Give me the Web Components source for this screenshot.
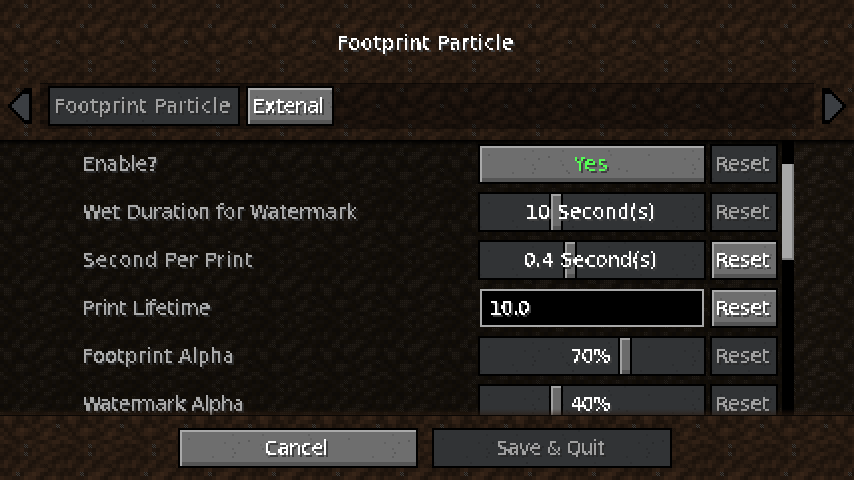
<!DOCTYPE html>
<html><head><meta charset="utf-8">
<style>
html,body{margin:0;padding:0;width:854px;height:480px;overflow:hidden;background:#1c130c}
</style></head>
<body>
<mc-screen>
  <mc-text slot="title" w="178" color="#fff">Footprint Particle</mc-text>
  <mc-button slot="tabs" width="192" tw="178" disabled>Footprint Particle</mc-button>
  <mc-button slot="tabs" width="88" tw="74">Extenal</mc-button>

  <mc-row label="Enable?" lw="77" reset="off"><mc-button width="228" green tw="36">Yes</mc-button></mc-row>
  <mc-row label="Wet Duration for Watermark" lw="276" reset="off"><mc-slider pos="71" tw="132">10 Second(s)</mc-slider></mc-row>
  <mc-row label="Second Per Print" lw="172" reset="on"><mc-slider pos="85" tw="136">0.4 Second(s)</mc-slider></mc-row>
  <mc-row label="Print Lifetime" lw="130" reset="on"><mc-field tw="42">10.0</mc-field></mc-row>
  <mc-row label="Footprint Alpha" lw="154" reset="off"><mc-slider pos="140" tw="42">70%</mc-slider></mc-row>
  <mc-row label="Watermark Alpha" lw="164" reset="off"><mc-slider pos="71" tw="42">40%</mc-slider></mc-row>

  <mc-button slot="footer" width="240" tw="66">Cancel</mc-button>
  <mc-button slot="footer" width="240" disabled tw="111">Save &amp; Quit</mc-button>
</mc-screen>

<script>
(function(){
  const map=["2101231021321012","101212g132112321","0120011220133101","1321023101221012",
   "23112320121k2132","0102311123320121","1013g02343101210","3221124331023421",
   "2432013210234310","1331001201322101","01201201231012g2","20113432k2123102",
   "1202332110243211","3110120012331023","2321012321012331","101212g212321210"];
  function tile(pal,stone,dots){
    let s='<svg xmlns="http://www.w3.org/2000/svg" width="64" height="64" shape-rendering="crispEdges">';
    map.forEach((row,y)=>{[...row].forEach((c,x)=>{
      const X=x*4,Y=y*4;
      if(c==='g'||c==='k'){
        s+=`<rect x="${X}" y="${Y}" width="4" height="4" fill="${pal[1]}"/>`;
        const col=c==='g'?stone:pal[0];
        for(let a=0;a<4;a++)for(let b=0;b<4;b++) if((a+b)%2===0) s+=`<rect x="${X+a}" y="${Y+b}" width="1" height="1" fill="${col}"/>`;
      } else {
        s+=`<rect x="${X}" y="${Y}" width="4" height="4" fill="${pal[+c]}"/>`;
        if(dots && +c>=3){ for(let a=0;a<4;a+=2)for(let b=0;b<4;b+=2) s+=`<rect x="${X+a}" y="${Y+b}" width="1" height="1" fill="${dots}"/>`; }
      }
    })});
    return s+'</svg>';
  }
  const uri=s=>'url("data:image/svg+xml,'+encodeURIComponent(s)+'")';
  let seed=7; const rnd=()=>(seed=(seed*16807)%2147483647)/2147483647;
  let sp='<svg xmlns="http://www.w3.org/2000/svg" width="160" height="36" shape-rendering="crispEdges">';
  for(let i=0;i<24;i++){const x=Math.floor(rnd()*80)*2,y=Math.floor(rnd()*18)*2,o=(.06+rnd()*.12).toFixed(2);sp+=`<rect x="${x}" y="${y}" width="2" height="2" fill="#000" opacity="${o}"/>`;}
  sp+='</svg>';
  const rs=document.documentElement.style;
  rs.setProperty('--dirt',uri(tile(['#1c130c','#22170f','#291c12','#302015','#372518'],'#3a3a38')));
  rs.setProperty('--dirt-dark',uri(tile(['#120e0a','#151009','#18130e','#1c1611','#1f1913'],'#26231f','#29231c')));
  rs.setProperty('--speck',uri(sp));

  const FONT='"DejaVu Sans", "Liberation Sans", sans-serif';
  const cv=document.createElement('canvas').getContext('2d');

  function define(name,css,render){
    customElements.define(name,class extends HTMLElement{
      constructor(){super();this.attachShadow({mode:'open'});}
      connectedCallback(){this.shadowRoot.innerHTML='<style>'+css+'</style>'+render.call(this);}
    });
  }
  const esc=s=>s.replace(/&/g,'&amp;').replace(/"/g,'&quot;');

  /* text: thresholded and sampled on a 2px grid, with a hard 2px shadow */
  customElements.define('mc-text',class extends HTMLElement{
    constructor(){super();this.attachShadow({mode:'open'});}
    connectedCallback(){
      const t=this.getAttribute('measure')||this.textContent, w=+this.getAttribute('w')||0;
      cv.font='400 19px "DejaVu Sans"';
      const nat=cv.measureText(t).width;
      const ls=w&&t.length>1?(w-2-nat)/(t.length-1):0;
      const c=this.getAttribute('color')||'#fff', s=this.getAttribute('shadow')||'#3f3f3f';
      this.shadowRoot.innerHTML=`<style>
        :host{display:inline-block;height:16px;line-height:16px;white-space:nowrap;color:${c};font-family:${FONT};font-size:19px;font-weight:400}
        span{display:inline-block;position:relative;top:-1px;left:-1px;${w?`width:${w}px;`:''}letter-spacing:${ls.toFixed(3)}px;filter:url(#px) drop-shadow(2px 2px 0 ${s})}
        svg{position:absolute;width:0;height:0}
      </style>
      <svg aria-hidden="true"><filter id="px" x="0" y="-20%" width="104%" height="140%" primitiveUnits="userSpaceOnUse" color-interpolation-filters="sRGB">
        <feComponentTransfer in="SourceGraphic" result="th"><feFuncA type="discrete" tableValues="0 1 1"/></feComponentTransfer>
        <feFlood x="0" y="0" width="1" height="1" flood-color="#000"/>
        <feComposite x="0" y="0" width="2" height="2"/>
        <feTile result="grid"/>
        <feComposite in="th" in2="grid" operator="in" result="a"/>
        <feOffset in="a" dx="1" dy="0" result="b"/>
        <feMerge result="row"><feMergeNode in="a"/><feMergeNode in="b"/></feMerge>
        <feOffset in="row" dx="0" dy="1" result="c"/>
        <feMerge><feMergeNode in="row"/><feMergeNode in="c"/></feMerge>
      </filter></svg><span><slot></slot></span>`;
    }
  });

  define('mc-button',`
    :host{display:block;box-sizing:border-box;border:2px solid #000;height:40px;flex:none}
    .b{height:36px;display:flex;align-items:center;justify-content:center;background:var(--speck),#6e6e6e;box-shadow:inset 2px 2px 0 #a9a9a9,inset 0 -4px 0 #555;box-sizing:border-box}
    :host([disabled]) .b{background:var(--speck),#313335;box-shadow:none}
  `,function(){
    this.style.width=this.getAttribute('width')+'px';
    const dis=this.hasAttribute('disabled');
    const col=this.hasAttribute('green')?'#55ff55':dis?'#a0a0a0':'#ffffff';
    const sh=dis?'#2a2a2a':'#3f3f3f';
    return `<div class="b"><mc-text measure="${esc(this.textContent)}" w="${this.getAttribute('tw')}" color="${col}" shadow="${sh}"><slot></slot></mc-text></div>`;
  });

  define('mc-slider',`
    :host{display:block;width:228px;height:40px;box-sizing:border-box;border:2px solid #000;position:relative;flex:none}
    .t{height:36px;background:var(--speck),#313335;display:flex;align-items:center;justify-content:center}
    .h{position:absolute;top:0;height:36px;width:14px;box-sizing:border-box;border:solid #000;border-width:0 2px;background:#6b6b6b;background-clip:padding-box}
    .i{height:36px;background:#6b6b6b;box-shadow:inset 2px 2px 0 #a2a2a2,inset 0 -4px 0 #555}
    mc-text{position:relative;z-index:1}
  `,function(){
    return `<div class="t"><mc-text measure="${esc(this.textContent)}" w="${this.getAttribute('tw')}"><slot></slot></mc-text></div>
      <div class="h" style="left:${+this.getAttribute('pos')-2}px"><div class="i"></div></div>`;
  });

  define('mc-field',`
    :host{display:flex;align-items:center;box-sizing:border-box;width:224px;height:38px;margin:1px 2px;border:2px solid #a8a8a8;background:#000;padding-left:8px;flex:none}
  `,function(){
    return `<mc-text measure="${esc(this.textContent)}" w="${this.getAttribute('tw')}"><slot></slot></mc-text>`;
  });

  define('mc-row',`
    :host{display:flex;align-items:center;height:40px;padding:0 4px 0 83px;box-sizing:border-box;width:782px;flex:none}
    .l{flex:1;min-width:0;display:flex;align-items:center}
    .c{width:228px;margin-right:4px;flex:none}
  `,function(){
    const off=this.getAttribute('reset')==='off'?' disabled':'';
    return `<div class="l"><mc-text color="#aaaaaa" shadow="#2a2a2a" w="${this.getAttribute('lw')}">${esc(this.getAttribute('label'))}</mc-text></div>
      <div class="c"><slot></slot></div><mc-button width="68" tw="56"${off}>Reset</mc-button>`;
  });

  define('mc-arrow',`
    :host{display:block;width:24px;height:36px;flex:none}
    svg{display:block}
  `,function(){
    const right=this.hasAttribute('right');
    let s='';
    for(let y=0;y<36;y+=2){
      const d=Math.min(y,34-y);
      const outer=Math.min(24,8+d);
      const inner=y<5||y>=31?0:Math.max(0,outer-7);
      const X=(x,w)=>right?x:24-x-w;
      s+=`<rect x="${X(0,outer)}" y="${y}" width="${outer}" height="2" fill="#000"/>`;
      if(inner) s+=`<rect x="${X(3,inner)}" y="${y}" width="${inner}" height="2" fill="#3b3e42"/>`;
    }
    return `<svg width="24" height="36" viewBox="0 0 24 36" shape-rendering="crispEdges">${s}</svg>`;
  });

  define('mc-screen',`
    :host{display:flex;flex-direction:column;width:854px;height:480px;overflow:hidden}
    header{height:140px;flex:none;background:var(--dirt);display:flex;flex-direction:column}
    .title{height:83px;display:flex;align-items:center;justify-content:center;padding-top:3px;box-sizing:border-box}
    .bar{height:46px;display:flex;align-items:center;gap:8px;padding:0 8px}
    .tabs{flex:1;height:46px;box-sizing:border-box;padding:3px 8px;display:flex;gap:6px;background:rgba(0,0,0,.33);box-shadow:inset 0 1px 0 rgba(0,0,0,.4)}
    main{height:276px;flex:none;position:relative;overflow:hidden;background:var(--dirt-dark) 0 -140px;display:flex}
    .view{width:782px;flex:none;background:rgba(0,0,0,.18);padding-top:4px;display:flex;flex-direction:column;gap:8px;box-sizing:border-box}
    .track{width:12px;flex:none;background:#000}
    .thumb{margin-top:24px;height:96px;background:#a8a8a8;box-shadow:inset -2px -2px 0 #808080}
    .top{position:absolute;left:0;right:0;top:0;height:6px;background:linear-gradient(#000,rgba(0,0,0,0));pointer-events:none}
    .bot{position:absolute;left:0;right:0;bottom:0;height:6px;background:linear-gradient(rgba(45,28,16,0),rgba(45,28,16,.55));pointer-events:none;border-bottom:1px solid #0a0705}
    footer{height:64px;flex:none;background:var(--dirt) 0 -416px;display:flex;align-items:flex-start;gap:14px;padding:12px 0 0 178px;box-sizing:border-box}
  `,function(){return `<header><div class="title"><slot name="title"></slot></div>
      <div class="bar"><mc-arrow></mc-arrow><div class="tabs"><slot name="tabs"></slot></div><mc-arrow right></mc-arrow></div></header>
     <main><div class="view"><slot></slot></div><div class="track"><div class="thumb"></div></div><div class="top"></div><div class="bot"></div></main>
     <footer><slot name="footer"></slot></footer>`;});
})();
</script>
</body></html>
